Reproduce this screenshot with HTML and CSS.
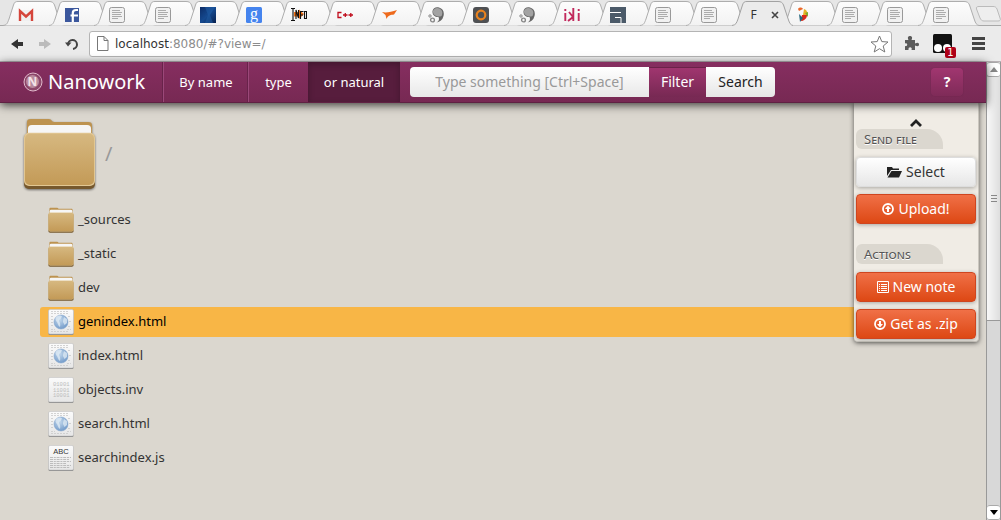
FILE: index.html
```html
<!DOCTYPE html>
<html lang="en">
<head>
<meta charset="utf-8">
<title>Nanowork</title>
<link rel="stylesheet" href="styles.css">
</head>
<body>
<svg class="defs" width="0" height="0" aria-hidden="true">
  <defs>
    <linearGradient id="g-tab" x1="0" y1="0" x2="0" y2="1"><stop offset="0" stop-color="#fdfdfd"/><stop offset="1" stop-color="#f2f2f2"/></linearGradient>
    <linearGradient id="g-folder" x1="0" y1="0" x2="0" y2="1"><stop offset="0" stop-color="#d6b880"/><stop offset="1" stop-color="#c39a57"/></linearGradient>
    <linearGradient id="g-paper" x1="0" y1="0" x2="0" y2="1"><stop offset="0" stop-color="#fbfbfb"/><stop offset="1" stop-color="#e6e6e6"/></linearGradient>
    <radialGradient id="g-globe" cx=".4" cy=".35" r=".7"><stop offset="0" stop-color="#c3d8ec"/><stop offset="1" stop-color="#6f98c8"/></radialGradient>
    <linearGradient id="g-blue" x1="0" y1="0" x2="1" y2="1"><stop offset="0" stop-color="#0c2c66"/><stop offset=".5" stop-color="#15498f"/><stop offset="1" stop-color="#08204e"/></linearGradient>
  </defs>
  <symbol id="tab" viewBox="0 0 62 26"><path d="M0 25.500C4 25 4.500 23 6 19L10.500 5C11.500 2 12.500 1.500 15 1.500H46C49 1.500 50.500 2.500 51.500 5L56.500 20C57.500 23 58.500 25 61 25.500" fill="url(#g-tab)" stroke="#adadad"/></symbol>
  <symbol id="tab-on" viewBox="0 0 62 26"><path d="M0 25.500C4 25 4.500 23 6 19L10.500 5C11.500 2 12.500 1.500 15 1.500H46C49 1.500 50.500 2.500 51.500 5L56.500 20C57.500 23 58.500 25 61 25.500V26H0Z" fill="#ebebeb"/><path d="M0 25.500C4 25 4.500 23 6 19L10.500 5C11.500 2 12.500 1.500 15 1.500H46C49 1.500 50.500 2.500 51.500 5L56.500 20C57.500 23 58.500 25 61 25.500" fill="none" stroke="#a2a2a2"/></symbol>
  <symbol id="doc" viewBox="0 0 16 16"><rect x=".5" y=".5" width="15" height="15" rx="2" fill="#f1f1f1" stroke="#999"/><path d="M3 3.500h8M3 5.500h10M3 7.500h9M3 9.500h10M3 11.500h6" stroke="#9a9a9a" stroke-width=".8"/></symbol>
  <symbol id="swirl" viewBox="0 0 16 16"><path d="M4.500 4C5 1 8-.5 11 .5C15 1.500 16.500 5 15.500 9C14.500 13 12 15 8.500 15.500C11 14 11.500 12 10.500 10C8 10.500 4 9 4.500 4Z" fill="#666"/><path d="M5 4C6 1 9 .3 11.500 1.500C14.500 3 15 6 13.500 9C11 10.500 4.500 9 5 4Z" fill="#a2a2a2"/><circle cx="2" cy="9" r="1.200" fill="none" stroke="#888"/><circle cx="4.500" cy="13" r="1.900" fill="none" stroke="#888" stroke-width="1.400"/></symbol>
  <symbol id="folder" viewBox="0 0 74 74">
    <path d="M4 20V6C4 3 5 2 8 2H26C30 2 28 5 32 5H66C69 5 70 6 70 9V20Z" fill="#bd9350"/>
    <rect x="5" y="8" width="64" height="20" rx="4" fill="#f6f6f6"/>
    <rect x="1" y="18" width="72" height="55" rx="5" fill="#76582d"/>
    <rect x="1" y="16" width="72" height="54" rx="5" fill="#e2c793"/>
    <rect x="2" y="17" width="70" height="52" rx="5" fill="url(#g-folder)"/>
  </symbol>
  <symbol id="page" viewBox="0 0 26 26"><rect x=".5" y="1" width="25" height="25" rx="1.500" fill="#858585"/><rect x=".5" y=".5" width="25" height="24.500" rx="1.500" fill="url(#g-paper)" stroke="#c4c4c4" stroke-width=".6"/></symbol>
  <symbol id="html" viewBox="0 0 26 26"><use href="#page"/><path d="M3 2.500h18M3 4.500h18M3 7.500h3M3 10.500h3M3 13.500h2M3 16.500h3M20 7.500h3M21 12.500h2M20 17.500h3M3 20.500h4M19 20.500h4M3 22.500h18" stroke="#c9c9c9" stroke-width=".8" stroke-dasharray="2 1"/><circle cx="13" cy="13" r="7" fill="url(#g-globe)" stroke="#86a7cf" stroke-width=".6"/><path d="M8 8C10 6 13 6 14 7.500C13 9 13 10 11 11C11 13 13 14 12 18C10 17 10 14 8.500 12.500C7.500 11 7 10 8 8ZM16 8L19 10L19 14L16.500 16L15 13C15 11 15.500 10 16 8Z" fill="#e6eff7" opacity=".7"/></symbol>
  <symbol id="caret" viewBox="0 0 10 6"><path d="M0 6L5 0L10 6Z"/></symbol>
</svg>

<header class="browser">
  <div class="tabs" role="tablist">
    <button class="tab" aria-label="Mail"><svg class="tab-bg"><use href="#tab"/></svg><svg class="fav" viewBox="0 0 16 16"><path d="M1 3h14v11H1z" fill="#f0f0f0"/><path d="M2 14V4l6 5.500L14 4v10" fill="none" stroke="#d5453b" stroke-width="2.400"/></svg></button>
    <button class="tab" aria-label="Social"><svg class="tab-bg"><use href="#tab"/></svg><svg class="fav" viewBox="0 0 16 16"><path d="M1 1h14v14H1z" fill="#3b579d"/><path d="M14 3h-2C9.500 3 8.800 4 8.800 6v9M6.500 8.500H14" fill="none" stroke="#fff" stroke-width="2.200"/></svg></button>
    <button class="tab" aria-label="Document"><svg class="tab-bg"><use href="#tab"/></svg><svg class="fav"><use href="#doc"/></svg></button>
    <button class="tab" aria-label="Document"><svg class="tab-bg"><use href="#tab"/></svg><svg class="fav"><use href="#doc"/></svg></button>
    <button class="tab" aria-label="Blue site"><svg class="tab-bg"><use href="#tab"/></svg><svg class="fav" viewBox="0 0 16 16"><path d="M0 0h16v16H0z" fill="url(#g-blue)"/><path d="M5 0L8 8L5 16H13L10 8L15 0Z" fill="#2160a8" opacity=".5"/></svg></button>
    <button class="tab" aria-label="Search engine"><svg class="tab-bg"><use href="#tab"/></svg><svg class="fav" viewBox="0 0 16 16"><rect width="16" height="16" rx="1.500" fill="#4584ee"/><text x="8" y="11.500" text-anchor="middle" font-family="Liberation Serif, serif" font-size="16" fill="#fff">g</text></svg></button>
    <button class="tab" aria-label="Info"><svg class="tab-bg"><use href="#tab"/></svg><svg class="fav" viewBox="0 0 16 16"><path d="M3 5h5V2.500L13 7l-5 5V9.500H3z" fill="#f47416"/><path d="M0 1.500h4M2 1.500v12M0 13.500h4M5 12V3l2.500 8V3M9.500 12V4.500h3M9.500 8h2.500M13.500 4.500h2v7h-2z" fill="none" stroke="#111" stroke-width="1.100"/></svg></button>
    <button class="tab" aria-label="C++"><svg class="tab-bg"><use href="#tab"/></svg><svg class="fav" viewBox="0 0 16 16"><path d="M4.500 5.500H1V10.500H4.500M6 8h4.500M8.300 6v4M11.500 8H16M13.800 6v4" fill="none" stroke="#c00d1d" stroke-width="1.300"/></svg></button>
    <button class="tab" aria-label="Bird"><svg class="tab-bg"><use href="#tab"/></svg><svg class="fav" viewBox="0 0 16 16"><path d="M0 5C4 6 9 5 15 3L12 7.500C9 8 6 8 4.500 12L3.500 8Z" fill="#ee6a1c"/></svg></button>
    <button class="tab" aria-label="Swirl"><svg class="tab-bg"><use href="#tab"/></svg><svg class="fav"><use href="#swirl"/></svg></button>
    <button class="tab" aria-label="Ring"><svg class="tab-bg"><use href="#tab"/></svg><svg class="fav" viewBox="0 0 16 16"><rect width="16" height="16" rx="3" fill="#4e5053"/><circle cx="8" cy="8" r="4.300" fill="none" stroke="#e8821e" stroke-width="2.200"/></svg></button>
    <button class="tab" aria-label="Swirl"><svg class="tab-bg"><use href="#tab"/></svg><svg class="fav"><use href="#swirl"/></svg></button>
    <button class="tab" aria-label="Iki"><svg class="tab-bg"><use href="#tab"/></svg><svg class="fav" viewBox="0 0 16 16"><path d="M1.300 6v8M14.700 6v8M1.300 2v2M14.700 2v2M9.300 1v13M5 5l4 5l-5 4" fill="none" stroke="#c2295d" stroke-width="1.900"/></svg></button>
    <button class="tab" aria-label="Maze"><svg class="tab-bg"><use href="#tab"/></svg><svg class="fav" viewBox="0 0 16 16"><path d="M0 0h16v16H0z" fill="#4b5a69"/><path d="M0 5.500h11M5 10.500h6V16" fill="none" stroke="#fff"/></svg></button>
    <button class="tab" aria-label="Document"><svg class="tab-bg"><use href="#tab"/></svg><svg class="fav"><use href="#doc"/></svg></button>
    <button class="tab" aria-label="Document"><svg class="tab-bg"><use href="#tab"/></svg><svg class="fav"><use href="#doc"/></svg></button>
    <button class="tab tab-active"><svg class="tab-bg"><use href="#tab-on"/></svg><span class="tab-title">F</span><svg class="tab-close" viewBox="0 0 8 8"><path d="M1 1l6 6M7 1L1 7" stroke="#444" stroke-width="1.600"/></svg></button>
    <button class="tab" aria-label="Parrot"><svg class="tab-bg"><use href="#tab"/></svg><svg class="fav" viewBox="0 0 16 16"><path d="M2 2C3 0 6 0 7 2L3 4Z" fill="#ec682b"/><path d="M8 2C11 3 12 6 11 9L7 8Z" fill="#e8b226"/><path d="M6 8L11 8C11 12 7 14 5 14Z" fill="#d8281b"/><path d="M3 7L7 11L4 15Z" fill="#26677d"/><path d="M9 6l3-1v5z" fill="#7da92d"/></svg></button>
    <button class="tab" aria-label="Document"><svg class="tab-bg"><use href="#tab"/></svg><svg class="fav"><use href="#doc"/></svg></button>
    <button class="tab" aria-label="Document"><svg class="tab-bg"><use href="#tab"/></svg><svg class="fav"><use href="#doc"/></svg></button>
    <button class="tab" aria-label="Document"><svg class="tab-bg"><use href="#tab"/></svg><svg class="fav"><use href="#doc"/></svg></button>
    <button class="new-tab" aria-label="New tab"><svg width="27" height="18" viewBox="0 0 27 18"><path d="M4 1.500H18C20 1.500 21 2 22 4L25 13C26 15 25 16 23 16H9C7 16 6 15 5 13L1.500 4C1 2 2 1.500 4 1.500Z" fill="#eee" stroke="#bbb"/></svg></button>
  </div>
  <div class="toolbar">
    <button class="tool" aria-label="Back"><svg width="13" height="12" viewBox="0 0 13 12"><path d="M0 6L7 1V4H12V8H7V11Z" fill="#333"/></svg></button>
    <button class="tool" aria-label="Forward"><svg width="13" height="12" viewBox="0 0 13 12"><path d="M13 6L6 1V4H1V8H6V11Z" fill="#bbb"/></svg></button>
    <button class="tool" aria-label="Reload"><svg width="14" height="14" viewBox="0 0 14 14"><path d="M3 7.500A4.500 4.500 0 1 1 8 12" fill="none" stroke="#444" stroke-width="2"/><path d="M0 5.500H6.500L3 9.500Z" fill="#444"/></svg></button>
    <div class="address">
      <svg width="12" height="15" viewBox="0 0 12 15"><path d="M.5.500H7L11 4.500V14.500H.5ZM7 .5V4.500H11" fill="#fff" stroke="#777"/></svg>
      <span class="url">localhost<span class="url-rest">:8080/#?view=/</span></span>
      <button class="star" aria-label="Bookmark"><svg width="19" height="18" viewBox="0 0 19 18"><path d="M9.500 1L11.800 6.600L18 7L13.200 11L14.800 17L9.500 13.700L4.200 17L5.800 11L1 7L7.200 6.600Z" fill="#fff" stroke="#777"/></svg></button>
    </div>
    <button class="tool tool-ext" aria-label="Extension"><svg width="15" height="15" viewBox="0 0 15 15"><path d="M1 4H4.500C3 1 4.500 0 6 0S9 1 7.500 4H11V7.500C14 6 15 7 15 8.500S14 11 11 9.500V14H7.500C9 11 4 10 4.500 14H1V10C4 11 4 6 1 7.500Z" fill="#5b5b5b"/></svg></button>
    <button class="tool tool-mask" aria-label="Monkey"><svg width="19" height="19" viewBox="0 0 19 19"><rect width="19" height="19" rx="1.500" fill="#111"/><circle cx="5" cy="14" r="4" fill="#fff"/><circle cx="14" cy="14" r="4" fill="#fff"/></svg><span class="count">1</span></button>
    <button class="tool tool-menu" aria-label="Menu"><svg width="13" height="13" viewBox="0 0 13 13"><path d="M0 1.500H13M0 6.500H13M0 11.500H13" stroke="#444" stroke-width="3"/></svg></button>
  </div>
</header>

<div class="viewport">
  <div class="app">
    <nav class="navbar">
      <a class="brand" href="#"><svg width="20" height="20" viewBox="0 0 20 20"><circle cx="10" cy="10" r="9" fill="#8b4568" stroke="#e2bccd"/><circle cx="9.500" cy="9.500" r="6.500" fill="#b98a9d"/><text x="9.500" y="14" text-anchor="middle" font-family="Noto Sans, sans-serif" font-weight="bold" font-size="12" fill="#f3e2e6">N</text></svg>Nanowork</a>
      <a class="nav-item nav-name" href="#">By name</a>
      <a class="nav-item nav-type" href="#">type</a>
      <a class="nav-item nav-natural" href="#">or natural</a>
      <form class="search">
        <input class="query" type="text" aria-label="Search" placeholder="Type something [Ctrl+Space]">
        <button class="filter" type="button">Filter</button>
        <button class="go" type="button">Search</button>
      </form>
      <button class="help">?</button>
    </nav>
    <main class="content">
      <h1 class="path"><svg class="folder-big"><use href="#folder"/></svg><span>/</span></h1>
      <ul class="files">
        <li><a class="file" href="#"><svg class="icon"><use href="#folder"/></svg>_sources</a></li>
        <li><a class="file" href="#"><svg class="icon"><use href="#folder"/></svg>_static</a></li>
        <li><a class="file" href="#"><svg class="icon"><use href="#folder"/></svg>dev</a></li>
        <li><a class="file file-on" href="#"><svg class="icon"><use href="#html"/></svg>genindex.html</a></li>
        <li><a class="file" href="#"><svg class="icon"><use href="#html"/></svg>index.html</a></li>
        <li><a class="file" href="#"><svg class="icon" viewBox="0 0 26 26"><use href="#page"/><g fill="#bcbcbc" font-family="Liberation Mono, monospace" font-size="5.500"><text x="5" y="9">01001</text><text x="5" y="14.500">11001</text><text x="5" y="20">10001</text></g></svg>objects.inv</a></li>
        <li><a class="file" href="#"><svg class="icon"><use href="#html"/></svg>search.html</a></li>
        <li><a class="file" href="#"><svg class="icon" viewBox="0 0 26 26"><use href="#page"/><text x="13" y="9" text-anchor="middle" font-family="Liberation Sans, sans-serif" font-size="7.500" fill="#333">ABC</text><path d="M2 12.500h21M2 14.500h19M2 16.500h21M2 18.500h16M2 20.500h21M2 22.500h20" stroke="#b0b0b0" stroke-width=".8" stroke-dasharray="3 .8 2 .8"/></svg>searchindex.js</a></li>
      </ul>
      <aside class="panel">
        <button class="collapse" aria-label="Collapse"><svg width="12" height="8" viewBox="0 0 12 8"><path d="M1 7L6 2L11 7" fill="none" stroke="#222" stroke-width="2.800"/></svg></button>
        <section class="group">
          <h2>Send file</h2>
          <button class="btn btn-light"><svg width="15" height="12" viewBox="0 0 15 12"><path d="M0 10V1H5L6 2.500H12V4H4Z" fill="#222"/><path d="M4.500 5H15L12 11.500H.5Z" fill="#222"/></svg>Select</button>
          <button class="btn"><svg width="12" height="12" viewBox="0 0 12 12"><circle cx="6" cy="6" r="5" fill="none" stroke="#fff" stroke-width="1.800"/><path d="M6 2.500L9 6H7V9H5V6H3Z" fill="#fff"/></svg>Upload!</button>
        </section>
        <section class="group">
          <h2>Actions</h2>
          <button class="btn"><svg width="12" height="12" viewBox="0 0 12 12"><path d="M.5.500h11v11H.5zM2 3.500h1M4 3.500h6M2 5.500h1M4 5.500h6M2 7.500h1M4 7.500h6M2 9.500h1M4 9.500h6" fill="none" stroke="#fff"/></svg>New note</button>
          <button class="btn"><svg width="12" height="12" viewBox="0 0 12 12"><circle cx="6" cy="6" r="5" fill="none" stroke="#fff" stroke-width="1.800"/><path d="M6 9.500L9 6H7V3H5V6H3Z" fill="#fff"/></svg>Get as .zip</button>
        </section>
      </aside>
    </main>
  </div>
  <div class="scroll" aria-hidden="true">
    <span class="scroll-arrow"><svg width="8" height="5" fill="#888"><use href="#caret"/></svg></span>
    <span class="scroll-thumb"><i></i><i></i><i></i></span>
    <span class="scroll-track"></span>
    <span class="scroll-arrow scroll-down"><svg width="8" height="5" fill="#000"><use href="#caret"/></svg></span>
  </div>
</div>
</body>
</html>
```
FILE: styles.css
```css
* { box-sizing: border-box; }

body {
  margin: 0;
  height: 100vh;
  display: flex;
  flex-direction: column;
  overflow: hidden;
  font: 14px/20px "Noto Sans", sans-serif;
  color: #333;
}

button, input { font: inherit; border: 0; padding: 0; margin: 0; background: none; color: inherit; }
a { color: inherit; text-decoration: none; }
svg { display: block; flex: none; }
.defs { position: absolute; }

/* Browser frame */
.browser { background: #ebebeb; border-bottom: 1px solid #b9b2b6; }
.tabs { display: flex; height: 26px; padding-left: 3px; background: #e6e6e6; box-shadow: inset 0 -1px #a8a8a8; }
.tab { position: relative; flex: 1; min-width: 0; display: flex; align-items: center; padding: 4px 0 0 15px; isolation: isolate; }
.tab-bg { position: absolute; left: 0; top: 0; z-index: -1; width: 62px; height: 26px; }
.tab-active { z-index: 1; gap: 14px; padding-left: 19px; }
.fav { width: 16px; height: 16px; }
.tab-title { font-size: 12px; }
.tab-close { width: 8px; height: 8px; }
.new-tab { width: 38px; padding: 2px 0 0 12px; }
.toolbar { display: flex; align-items: center; height: 35px; padding: 0 16px 0 11px; }
.tool { width: 27px; display: flex; }
.tool-ext { width: 30px; justify-content: center; margin-left: 4px; }
.tool-mask { position: relative; width: 32px; justify-content: center; }
.tool-menu { width: 27px; justify-content: flex-end; }
.count { position: absolute; right: 2px; bottom: -5px; width: 11px; height: 11px; border-radius: 2px; background: #b00018; color: #fff; font: 10px/11px "DejaVu Sans", sans-serif; text-align: center; }
.address { flex: 1; display: flex; align-items: center; gap: 6px; height: 26px; padding: 0 2px 0 7px; margin-left: -3px; border: 1px solid #b4b4b4; border-radius: 3px; background: #fff; }
.url { flex: 1; font: 12px/18px "DejaVu Sans", sans-serif; color: #333; }
.url-rest { color: #8c8c8c; }

/* Page area */
.viewport { flex: 1; display: flex; min-height: 0; }
.app { flex: 1; display: flex; flex-direction: column; background: #dbd7cf; }

.navbar { position: relative; z-index: 2; display: flex; height: 41px; padding-right: 23px; background: linear-gradient(#862e60, #772953); border-bottom: 1px solid #5f2143; box-shadow: 0 2px 9px rgba(0, 0, 0, .75); color: #fff; }
.brand { display: flex; align-items: center; gap: 5px; width: 163px; padding-left: 23px; font-size: 20px; }
.nav-item { display: flex; align-items: center; justify-content: center; border-left: 1px solid #9b4879; box-shadow: -1px 0 #68234a; font-size: 13px; }
.nav-name { width: 85px; }
.nav-type { width: 60px; }
.nav-natural { width: 92px; border: 0; background: #571d3d; box-shadow: inset 0 2px 6px rgba(0, 0, 0, .25); }
.search { display: flex; flex: 0 1 365px; height: 30px; margin: 5px 0 0 10px; }
.query { flex: 1; min-width: 0; border-radius: 4px 0 0 4px; background: linear-gradient(#fff, #e8e8e8); text-align: center; color: #333; }
.query::placeholder { color: #999; }
.filter { width: 57px; background: linear-gradient(#a13670, #772953); box-shadow: inset 0 1px #6b2249; }
.go { width: 69px; border-radius: 0 4px 4px 0; background: linear-gradient(#fff, #e6e6e6); color: #222; }
.help { width: 32px; height: 28px; margin: 6px 0 0 auto; border-radius: 4px; background: linear-gradient(#a13670, #7f2b58); box-shadow: 0 0 1px #5f2143; font-weight: bold; }

.content { position: relative; flex: 1; padding: 14px 0 0 23px; }
.path { display: flex; align-items: center; gap: 9px; margin: 0; font-size: 20px; font-weight: normal; color: #999; }
.folder-big { width: 73px; height: 73px; filter: drop-shadow(0 1px 1px rgba(0, 0, 0, .5)); }
.files { display: grid; gap: 4px; margin: 0; padding: 15px 7px 0 17px; list-style: none; }
.file { display: flex; align-items: center; gap: 4px; height: 30px; padding: 0 8px 3px; border-radius: 3px; font-size: 13px; }
.file-on { background: #f8b646; color: #000; }
.icon { width: 26px; height: 26px; margin-top: 2px; }

.panel { position: absolute; top: 0; right: 7px; width: 125px; padding: 16px 2px 2px; border: solid #cbc7bf; border-width: 0 1px 1px 0; border-radius: 0 0 4px 4px; background: #f0ece5; box-shadow: 0 1px 5px rgba(0, 0, 0, .6); }
.collapse { display: flex; width: 100%; height: 10px; justify-content: center; }
.group { display: grid; gap: 7px; }
.group + .group { margin-top: 20px; }
.group h2 { justify-self: start; width: 87px; height: 20px; margin: 0 0 1px; padding-left: 8px; border-radius: 6px 16px 0 6px; background: #dbd7cf; font-size: 13px; font-weight: normal; font-variant: small-caps; color: #555; text-shadow: 0 1px #fff; }
.btn { display: flex; align-items: center; justify-content: center; gap: 4px; height: 30px; border: 1px solid #cf451f; border-radius: 4px; background: linear-gradient(#f07047, #dd4814); box-shadow: 0 1px 4px rgba(0, 0, 0, .3); color: #fff; }
.btn-light { border-color: #ddd; background: linear-gradient(#fff, #e6e6e6); color: #333; }

/* Scroll bar */
.scroll { display: flex; flex-direction: column; width: 15px; border: 1px solid #999; border-width: 0 1px; background: #d8d8d8; }
.scroll-arrow { display: flex; align-items: center; justify-content: center; height: 15px; border: 1px solid #aaa; border-width: 1px 0; border-radius: 3px; background: #fff; }
.scroll-down svg { transform: rotate(180deg); }
.scroll-thumb { flex: 243; display: flex; flex-direction: column; align-items: center; justify-content: center; gap: 2px; border-bottom: 1px solid #999; background: linear-gradient(90deg, #f8f8f8, #dedede); }
.scroll-thumb i { width: 6px; height: 1px; background: #888; }
.scroll-track { flex: 184; }
```
